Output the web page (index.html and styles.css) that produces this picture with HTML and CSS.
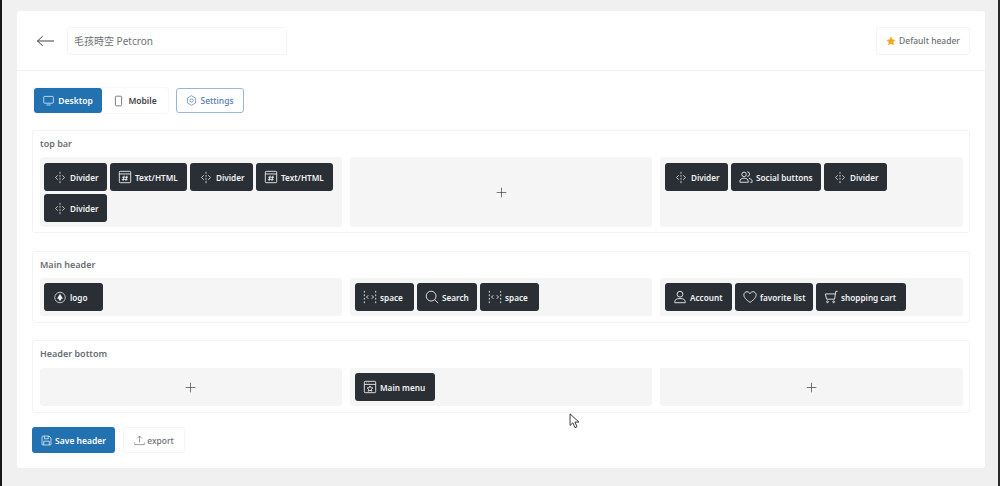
FILE: index.html
```html
<!DOCTYPE html>
<html lang="en">
<head>
<meta charset="utf-8">
<title>Header builder</title>
<link rel="stylesheet" href="styles.css">
</head>
<body>
<svg class="defs" width="0" height="0" aria-hidden="true">
  <symbol id="i-divider" viewBox="0 0 16 16"><path d="M8 .5v2.500M8 4.500v2.500M8 8.500v2.500M8 12.500v3M5 5 2 8l3 3M11 5l3 3-3 3"/></symbol>
  <symbol id="i-text" viewBox="0 0 16 16"><path d="M2.500 1.500h11a1 1 0 0 1 1 1v11a1 1 0 0 1-1 1h-11a1 1 0 0 1-1-1v-11a1 1 0 0 1 1-1zM1.500 4.500h13M7 6.500l-1.200 6M10.200 6.500l-1.200 6M4.800 8.300h6.600M4.400 10.700h6.600"/></symbol>
  <symbol id="i-people" viewBox="0 0 16 16"><circle cx="5.800" cy="5" r="2.600"/><path d="M1 14v-1.200c0-2 1.800-3.400 4.800-3.400s4.800 1.400 4.800 3.400V14zM9.500 2.100a2.600 2.600 0 0 1 0 5.200M11.400 9.600c2.200.3 3.600 1.600 3.600 3.300V14h-2"/></symbol>
  <symbol id="i-space" viewBox="0 0 16 16"><path d="M1.500 1v2M1.500 5v2M1.500 9v2M1.500 13v2M14.500 1v2M14.500 5v2M14.500 9v2M14.500 13v2M6 6 4 8l2 2M10 6l2 2-2 2"/></symbol>
  <symbol id="i-search" viewBox="0 0 16 16"><circle cx="7" cy="7" r="5.600"/><path d="m11 11 4 4"/></symbol>
  <symbol id="i-user" viewBox="0 0 16 16"><circle cx="8" cy="4.800" r="3.300"/><path d="M2 14.500v-1.200c0-2.200 2.200-3.600 6-3.600s6 1.400 6 3.600v1.200z"/></symbol>
  <symbol id="i-heart" viewBox="0 0 16 16"><path d="M8 14.200C3 10.600 1 8.200 1 5.600 1 3.500 2.700 2 4.500 2 6 2 7.300 2.800 8 4.200 8.700 2.800 10 2 11.500 2 13.300 2 15 3.500 15 5.600c0 2.600-2 5-7 8.600z"/></symbol>
  <symbol id="i-cart" viewBox="0 0 16 16"><path d="M15.500 1.500h-2l-1.400 9H3L1.500 4.500h11.300"/><circle cx="4" cy="13.500" r="1"/><circle cx="11" cy="13.500" r="1"/></symbol>
  <symbol id="i-menu" viewBox="0 0 16 16"><path d="M2.500 1.500h11a1 1 0 0 1 1 1v11a1 1 0 0 1-1 1h-11a1 1 0 0 1-1-1v-11a1 1 0 0 1 1-1zM1.500 5h13M4 3.200h.5M6.500 3.200H7M8 6.800l1 2 2.200.3-1.600 1.500.4 2.200L8 11.800l-2 1 .4-2.200-1.600-1.500L7 8.800z"/></symbol>
  <symbol id="i-logo" viewBox="0 0 16 16"><circle cx="8" cy="8" r="7"/><path class="solid" d="M8 3 12 9.500H9.500V12h-3V9.500H4z"/></symbol>
  <symbol id="i-plus" viewBox="0 0 16 16"><path d="M8 1v14M1 8h14"/></symbol>
</svg>

<div class="edge-mark edge-mark-a"></div>
<div class="edge-mark edge-mark-b"></div>

<main class="panel">
  <header class="topline">
    <button class="back" aria-label="Back">
      <svg viewBox="0 0 20 12" width="19" height="12"><path d="M19 6H1.500M7 1 1.500 6 7 11"/></svg>
    </button>
    <div class="name-field">毛孩時空 Petcron</div>
    <button class="default-btn">
      <svg class="star" viewBox="0 0 16 16" width="10" height="10"><path d="M8 .8l2.300 4.600 5 .8-3.600 3.500.9 5.100L8 12.400l-4.600 2.400.9-5.100L.7 6.200l5-.8z"/></svg>
      Default header
    </button>
  </header>

  <div class="content">
    <div class="tabs">
      <div class="seg">
        <button class="seg-btn is-active">
          <svg class="ico" viewBox="0 0 16 16" width="11" height="11"><path d="M2.500 2h11A1.500 1.500 0 0 1 15 3.500v7a1.500 1.500 0 0 1-1.500 1.500h-11A1.500 1.500 0 0 1 1 10.500v-7A1.500 1.500 0 0 1 2.500 2zM5 14.500h6"/></svg>
          Desktop
        </button>
        <button class="seg-btn">
          <svg class="ico" viewBox="0 0 16 16" width="11" height="12"><path d="M5 1h6a1.500 1.500 0 0 1 1.500 1.500v11A1.500 1.500 0 0 1 11 15H5a1.500 1.500 0 0 1-1.500-1.500v-11A1.500 1.500 0 0 1 5 1z"/></svg>
          Mobile
        </button>
      </div>
      <button class="settings">
        <svg class="ico" viewBox="0 0 16 16" width="11" height="11"><path d="M8 1l6 3.500v7L8 15l-6-3.500v-7z"/><circle cx="8" cy="8" r="2.400"/></svg>
        Settings
      </button>
    </div>

    <section class="row row-top">
      <h2 class="row-title">top bar</h2>
      <div class="zones zones-tall">
        <div class="zone">
          <span class="chip chip-divider"><svg class="ci"><use href="#i-divider"/></svg>Divider</span>
          <span class="chip chip-text"><svg class="ci ci-lg"><use href="#i-text"/></svg>Text/HTML</span>
          <span class="chip chip-divider"><svg class="ci"><use href="#i-divider"/></svg>Divider</span>
          <span class="chip chip-text"><svg class="ci ci-lg"><use href="#i-text"/></svg>Text/HTML</span>
          <span class="chip chip-divider"><svg class="ci"><use href="#i-divider"/></svg>Divider</span>
        </div>
        <div class="zone zone-empty"><svg class="plus"><use href="#i-plus"/></svg></div>
        <div class="zone">
          <span class="chip chip-divider"><svg class="ci"><use href="#i-divider"/></svg>Divider</span>
          <span class="chip chip-social"><svg class="ci ci-lg"><use href="#i-people"/></svg>Social buttons</span>
          <span class="chip chip-divider"><svg class="ci"><use href="#i-divider"/></svg>Divider</span>
        </div>
      </div>
    </section>

    <section class="row">
      <h2 class="row-title">Main header</h2>
      <div class="zones">
        <div class="zone">
          <span class="chip chip-logo"><svg class="ci"><use href="#i-logo"/></svg>logo</span>
        </div>
        <div class="zone">
          <span class="chip chip-space"><svg class="ci ci-lg"><use href="#i-space"/></svg>space</span>
          <span class="chip chip-search"><svg class="ci ci-lg"><use href="#i-search"/></svg>Search</span>
          <span class="chip chip-space"><svg class="ci ci-lg"><use href="#i-space"/></svg>space</span>
        </div>
        <div class="zone">
          <span class="chip chip-account"><svg class="ci ci-lg"><use href="#i-user"/></svg>Account</span>
          <span class="chip chip-fav"><svg class="ci ci-lg"><use href="#i-heart"/></svg>favorite list</span>
          <span class="chip chip-cart"><svg class="ci ci-lg"><use href="#i-cart"/></svg>shopping cart</span>
        </div>
      </div>
    </section>

    <section class="row row-last">
      <h2 class="row-title">Header bottom</h2>
      <div class="zones">
        <div class="zone zone-empty"><svg class="plus"><use href="#i-plus"/></svg></div>
        <div class="zone">
          <span class="chip chip-menu"><svg class="ci ci-lg"><use href="#i-menu"/></svg>Main menu</span>
        </div>
        <div class="zone zone-empty"><svg class="plus"><use href="#i-plus"/></svg></div>
      </div>
    </section>

    <div class="actions">
      <button class="save">
        <svg class="ico" viewBox="0 0 16 16" width="11" height="11"><path d="M2.500 1.500h9l3 3v9a1 1 0 0 1-1 1h-11a1 1 0 0 1-1-1v-11a1 1 0 0 1 1-1zM5 1.500v4h5.500v-4M4 14.500V9h8v5.500"/></svg>
        Save header
      </button>
      <button class="export">
        <svg class="ico" viewBox="0 0 16 16" width="11" height="11"><path d="M8 11V1.500M4.500 5 8 1.500 11.500 5M1 11v3h14v-3"/></svg>
        export
      </button>
    </div>
  </div>
</main>

<svg class="cursor" viewBox="0 0 12 18" width="11" height="16"><path d="M1 1v13l3.200-3 2.300 5.500 2.300-1-2.300-5.300H11z"/></svg>
</body>
</html>
```
FILE: styles.css
```css
* { box-sizing: border-box; }
html, body { height: 100%; }
body {
  margin: 0;
  height: 486px;
  overflow: hidden;
  background: #f0f0f0;
  border-left: 2px solid #17171a;
  border-right: 2px solid #2a2a2a;
  padding: 11px 13px 18px 15px;
  font-family: "Noto Sans", "Noto Sans CJK TC", sans-serif;
  color: #3a3f45;
  position: relative;
}
button { font: inherit; cursor: pointer; }
svg path, svg circle { fill: none; stroke: currentColor; stroke-width: 1; }
.defs { position: absolute; }
.solid { fill: currentColor !important; stroke: none !important; }

.edge-mark { position: absolute; left: -2px; width: 2px; height: 8px; background: #1a1acb; }
.edge-mark-a { top: 76px; }
.edge-mark-b { top: 93px; }

.panel {
  height: 457px;
  background: #fff;
  border-radius: 3px;
  display: flex;
  flex-direction: column;
}
.topline {
  height: 60px;
  flex: none;
  display: flex;
  align-items: center;
  padding: 0 15px 0 19px;
  border-bottom: 1px solid #f2f2f2;
}
.back {
  border: 0;
  background: none;
  padding: 0;
  margin-right: 12px;
  width: 19px;
  height: 12px;
  color: #33373c;
  display: flex;
}
.name-field {
  width: 220px;
  height: 28px;
  border: 1px solid #f4f4f4;
  border-radius: 3px;
  padding: 0 6px;
  line-height: 26px;
  font-size: 10px;
  color: #6d7075;
}
.default-btn {
  margin-left: auto;
  width: 94px;
  height: 28px;
  border: 1px solid #f3f3f3;
  border-radius: 3px;
  background: #fff;
  font-size: 8.5px;
  font-weight: 500;
  color: #6d7075;
  display: flex;
  align-items: center;
  justify-content: center;
  gap: 3px;
  padding: 0;
}
.star path { fill: #f5a623; stroke: none; }

.content { padding: 17px 15px 0; flex: 1; }
.tabs { display: flex; align-items: center; gap: 8px; height: 25px; margin-bottom: 17px; padding-left: 2px; }
.seg { display: flex; box-shadow: 0 0 0 1px #f7f7f7; border-radius: 3px; }
.seg-btn {
  width: 66px;
  height: 25px;
  border: 0;
  border-radius: 3px;
  background: #fff;
  font-size: 8.5px;
  font-weight: 600;
  color: #3f4348;
  display: flex;
  align-items: center;
  justify-content: center;
  gap: 4px;
  padding: 0;
}
.seg-btn.is-active { width: 68px; background: #2271b1; color: #fff; }
.settings {
  width: 68px;
  height: 25px;
  border: 1px solid #9ab6d6;
  border-radius: 3px;
  background: #fff;
  font-size: 8.5px;
  font-weight: 500;
  color: #4f7cac;
  display: flex;
  align-items: center;
  justify-content: center;
  gap: 3px;
  padding: 0;
}

.row {
  border: 1px solid #f3f3f3;
  border-radius: 3px;
  padding: 7px 7px 6px;
  margin-bottom: 17px;
  width: 938px;
}
.row-top { padding-bottom: 5px; margin-bottom: 18px; }
.row-last { margin-bottom: 14px; }
.row-title {
  margin: 0 0 7px;
  font-size: 9px;
  line-height: 12px;
  height: 12px;
  font-weight: 600;
  color: #6a6d72;
}
.row-last .row-title { margin-bottom: 8px; }
.zones { display: grid; grid-template-columns: 302px 302px 303px; gap: 8px; }
.zone {
  min-height: 37px;
  background: #f5f5f6;
  border-radius: 3px;
  padding: 5px;
  display: flex;
  flex-wrap: wrap;
  align-content: flex-start;
  gap: 3px;
}
.zone:first-child { padding-left: 4px; }
.zones-tall .zone { min-height: 70px; padding-top: 6px; }
.zone-empty { align-items: center; align-content: center; justify-content: center; color: #3a3c40; }
.plus { width: 11px; height: 11px; }

.chip {
  height: 28px;
  padding-left: 10px;
  background: #2a2f36;
  border-radius: 3px;
  color: #f2f3f4;
  font-size: 8.2px;
  font-weight: 600;
  display: inline-flex;
  align-items: center;
  gap: 4px;
  white-space: nowrap;
}
.chip:has(.ci-lg) { padding-left: 8px; gap: 3px; }
.ci { width: 12px; height: 13px; flex: none; }
.ci-lg { width: 14px; height: 14px; }
.chip-divider { width: 63px; }
.chip-text { width: 77px; }
.chip-social { width: 90px; }
.chip-logo { width: 59px; }
.chip-space { width: 59px; }
.chip-search { width: 60px; }
.chip-account { width: 67px; }
.chip-fav { width: 78px; }
.chip-cart { width: 90px; }
.chip-menu { width: 80px; }

.actions { display: flex; align-items: center; gap: 8px; }
.save {
  width: 83px;
  height: 26px;
  border: 0;
  border-radius: 3px;
  background: #2271b1;
  color: #fff;
  font-size: 8.5px;
  font-weight: 600;
  display: flex;
  align-items: center;
  justify-content: center;
  gap: 3px;
  padding: 0;
}
.export {
  width: 62px;
  height: 26px;
  border: 1px solid #f5f5f5;
  border-radius: 3px;
  background: #fff;
  color: #6d7075;
  font-size: 8.5px;
  font-weight: 500;
  display: flex;
  align-items: center;
  justify-content: center;
  gap: 2px;
  padding: 0;
}
.cursor { position: absolute; left: 567px; top: 413px; }
.cursor path { fill: #fff; stroke: #222; }
```
